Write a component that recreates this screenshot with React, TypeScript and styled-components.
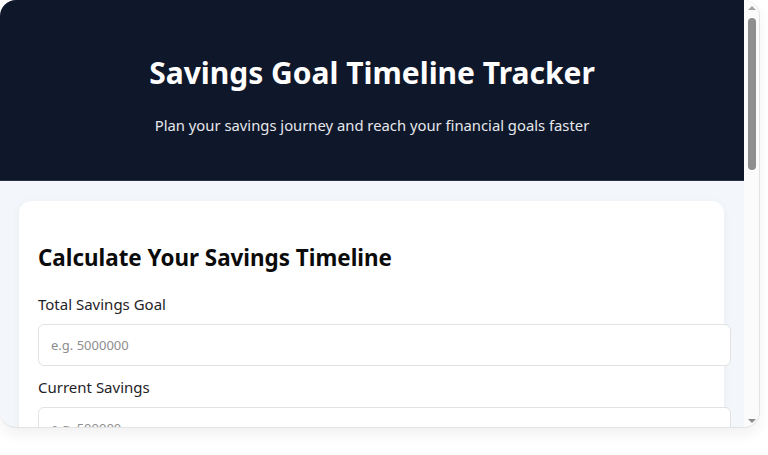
import styled, { createGlobalStyle } from 'styled-components';

const GlobalStyle = createGlobalStyle`
  html, body {
    margin: 0;
    padding: 0;
    background: #ffffff;
  }
  * {
    box-sizing: border-box;
  }
  body {
    font-family: 'Noto Sans', 'Open Sans', sans-serif;
    color: #111827;
  }
`;

const Page = styled.div`
  width: 768px;
  height: 455px;
  padding: 0 8px 27px 0;
`;

const Frame = styled.div`
  display: flex;
  width: 760px;
  height: 428px;
  border: 1px solid #e3e3e3;
  border-top: none;
  border-left: none;
  border-radius: 16px;
  overflow: hidden;
  box-shadow: 0 6px 14px rgba(0, 0, 0, 0.06);
  background: #f3f6fa;
`;

const Viewport = styled.div`
  flex: 1;
  min-width: 0;
  height: 100%;
  overflow: hidden;
`;

const Rail = styled.div`
  width: 15px;
  flex: none;
  display: flex;
  flex-direction: column;
  background: #fbfbfb;
`;

const Arrow = styled.div<{ $dir: 'up' | 'down' }>`
  height: 15px;
  flex: none;
  display: flex;
  align-items: center;
  justify-content: center;

  &::before {
    content: '';
    width: 0;
    height: 0;
    border-left: 4px solid transparent;
    border-right: 4px solid transparent;
    ${(p) =>
      p.$dir === 'up'
        ? 'border-bottom: 4px solid #a3a3a3; margin-top: 1px;'
        : 'border-top: 4px solid #8a8a8a; margin-top: 3px;'}
  }
`;

const Track = styled.div`
  flex: 1;
  display: flex;
  justify-content: center;
  padding-top: 3px;
`;

const Thumb = styled.div`
  width: 8px;
  height: 152px;
  border-radius: 4px;
  background: #8f8f8f;
`;

const Header = styled.header`
  background: #0f172a;
  border-bottom: 1px solid #2a3344;
  padding: 54px 20px 43px;
  text-align: center;
  color: #ffffff;
`;

const Title = styled.h1`
  margin: 0 0 21px;
  font-size: 30px;
  line-height: 38px;
  font-weight: 700;
`;

const Subtitle = styled.p`
  margin: 0;
  font-size: 14.8px;
  line-height: 24px;
  color: #e5e7eb;
`;

const Main = styled.main`
  padding: 20px 20px 40px 19px;
`;

const Card = styled.section`
  background: #ffffff;
  border-radius: 12px;
  padding: 20px 19px 24px;
  box-shadow: 0 2px 8px rgba(15, 23, 42, 0.05);
`;

const CardTitle = styled.h2`
  margin: 22px 0 20px;
  font-size: 22.4px;
  line-height: 29px;
  font-weight: 700;
  color: #0b0b0b;
`;

const Field = styled.div`
  margin-bottom: 9px;
`;

const Label = styled.label`
  display: block;
  font-size: 15px;
  line-height: 24px;
  margin-bottom: 8px;
  color: #1f2328;
`;

const Input = styled.input`
  box-sizing: content-box;
  display: block;
  width: 100%;
  height: 20px;
  padding: 10px 12px;
  border: 1px solid #e2e2e2;
  border-radius: 6px;
  background: #ffffff;
  font-family: inherit;
  font-size: 13px;
  color: #111827;
  outline: none;

  &::placeholder {
    color: #8d8d8d;
  }
`;

const fields = [
  { id: 'goal', label: 'Total Savings Goal', placeholder: 'e.g. 5000000' },
  { id: 'current', label: 'Current Savings', placeholder: 'e.g. 500000' },
];

export default function App() {
  return (
    <>
      <GlobalStyle />
      <Page>
        <Frame>
          <Viewport>
            <Header>
              <Title>Savings Goal Timeline Tracker</Title>
              <Subtitle>Plan your savings journey and reach your financial goals faster</Subtitle>
            </Header>
            <Main>
              <Card>
                <CardTitle>Calculate Your Savings Timeline</CardTitle>
                {fields.map((f) => (
                  <Field key={f.id}>
                    <Label htmlFor={f.id}>{f.label}</Label>
                    <Input id={f.id} type="number" placeholder={f.placeholder} />
                  </Field>
                ))}
              </Card>
            </Main>
          </Viewport>
          <Rail>
            <Arrow $dir="up" />
            <Track>
              <Thumb />
            </Track>
            <Arrow $dir="down" />
          </Rail>
        </Frame>
      </Page>
    </>
  );
}
